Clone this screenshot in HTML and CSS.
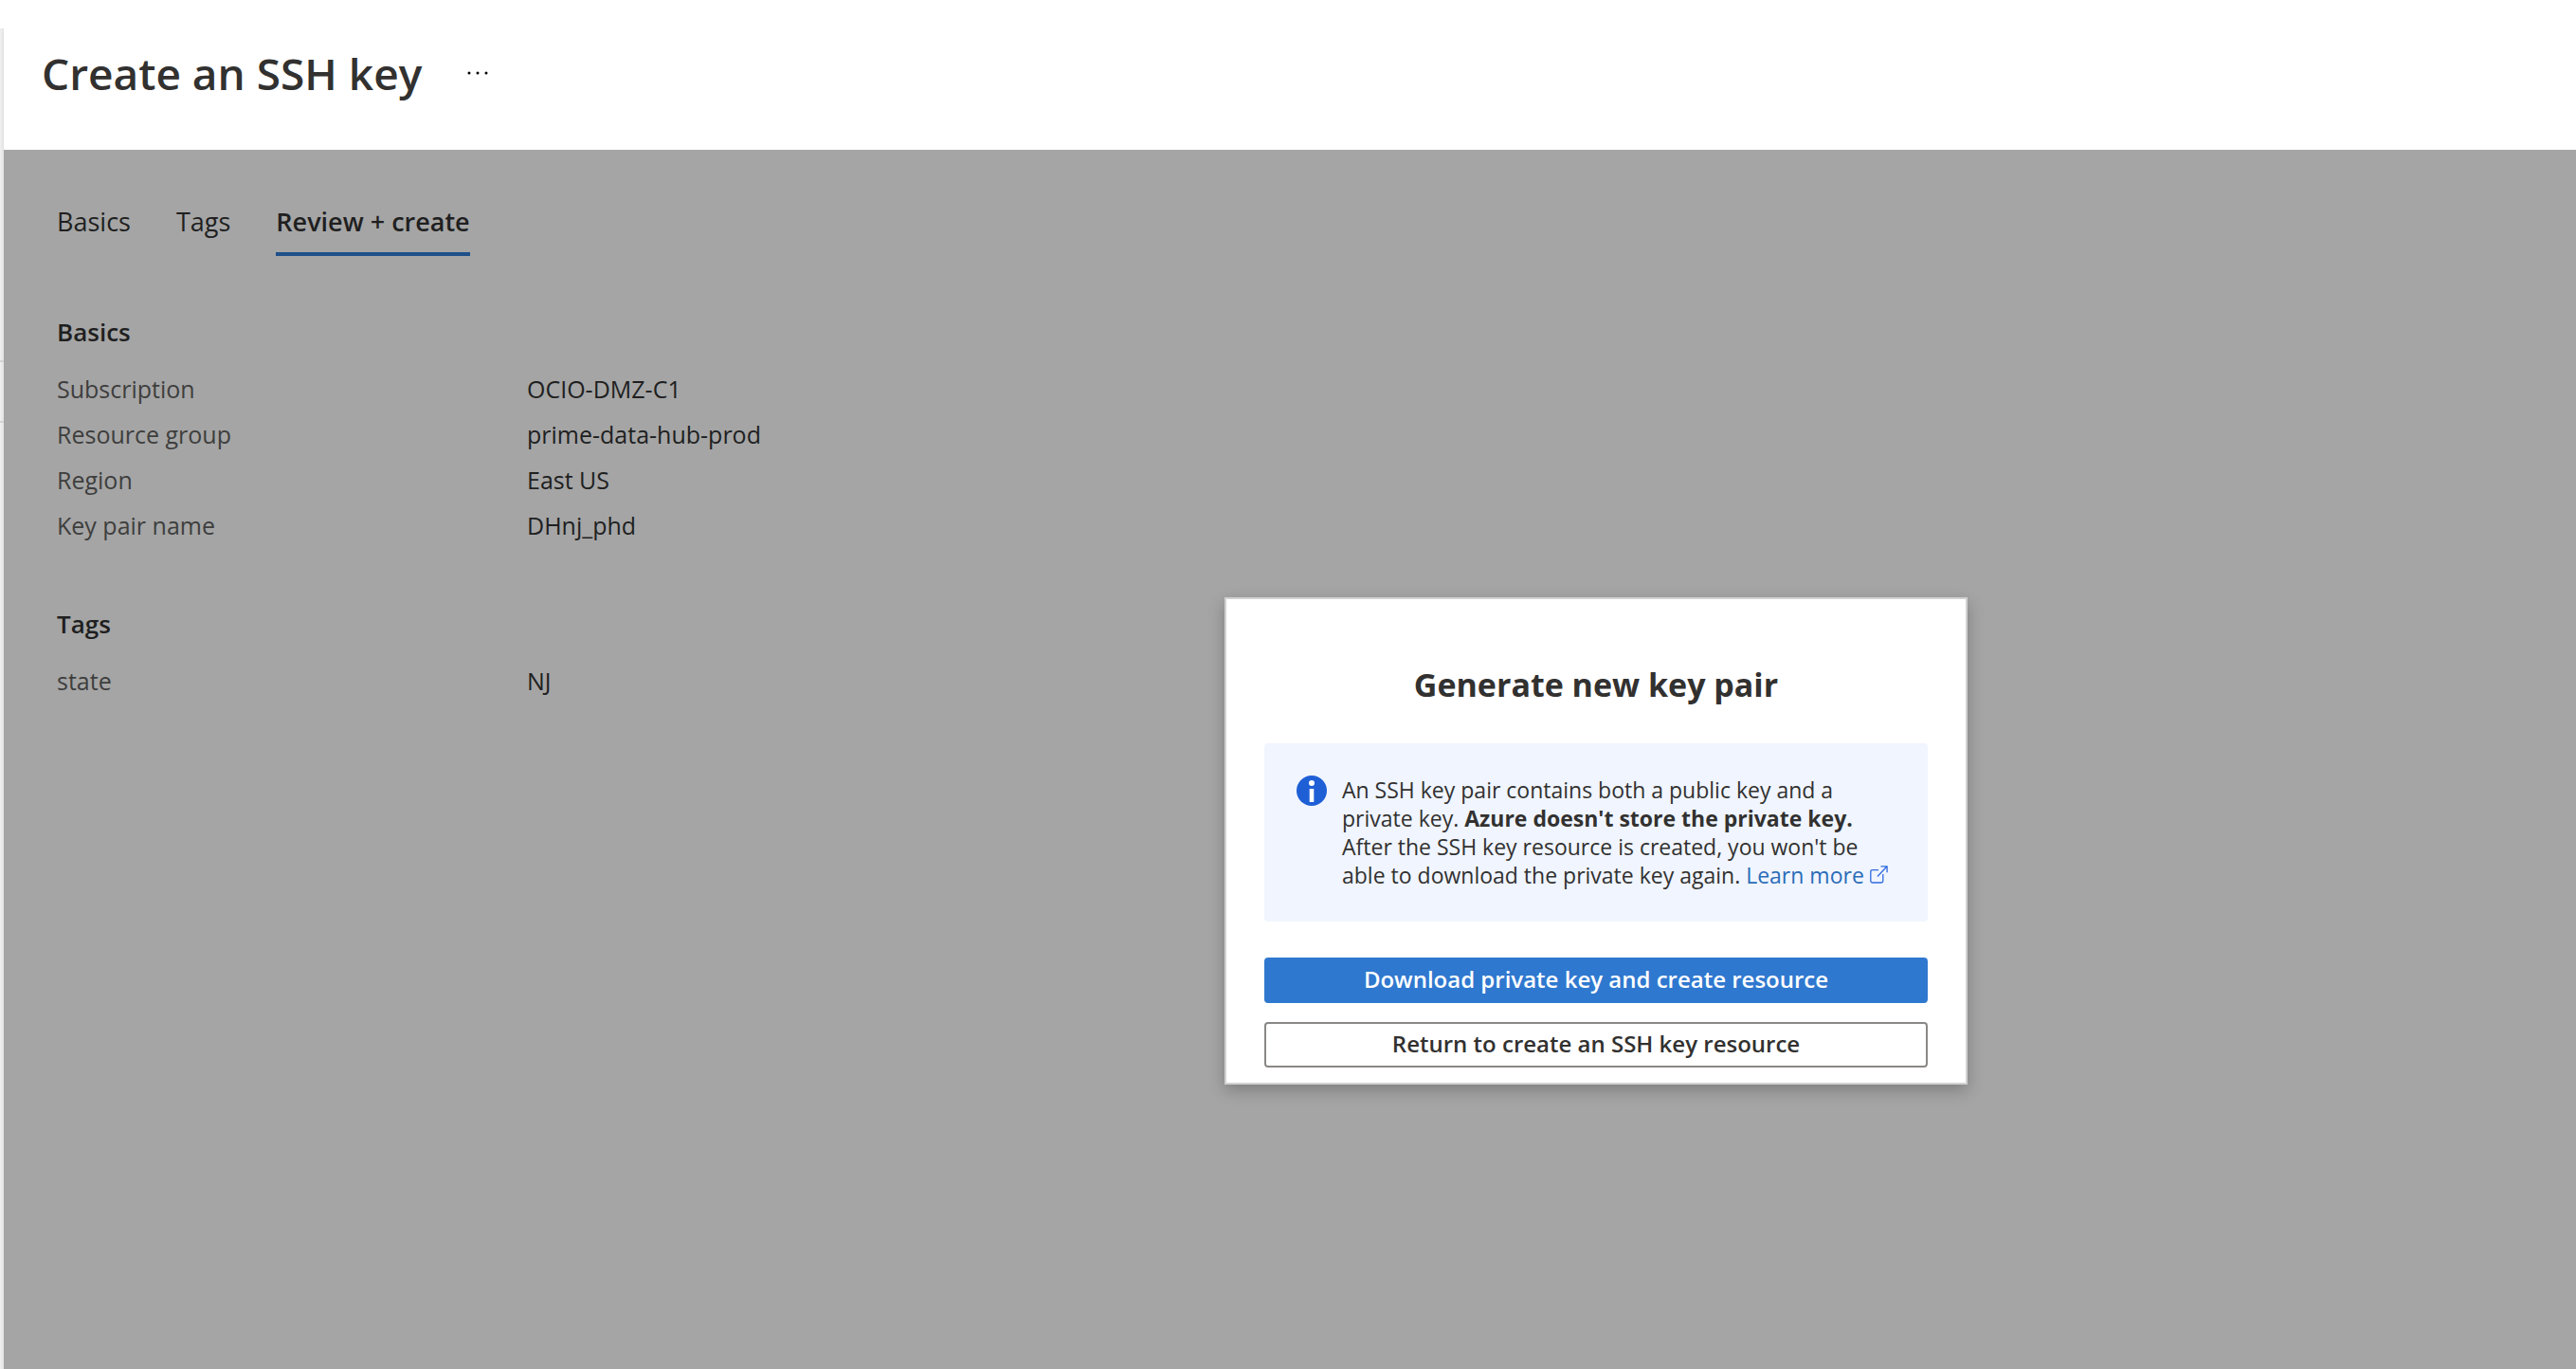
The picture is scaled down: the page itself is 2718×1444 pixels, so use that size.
FILE: index.html
```html
<!DOCTYPE html>
<html lang="en">
<head>
<meta charset="utf-8">
<title>Create an SSH key</title>
<link rel="stylesheet" href="styles.css">
</head>
<body>
<div class="portal">
  <aside class="rail"><span class="rail-item"></span></aside>
  <main class="blade">
    <header class="blade-header">
      <h1 class="blade-title">Create an SSH key</h1>
      <button class="more" type="button" aria-label="More actions">
        <svg width="22" height="4" viewBox="0 0 22 4"><circle cx="2" cy="2" r="1.5"/><circle cx="11" cy="2" r="1.5"/><circle cx="20" cy="2" r="1.5"/></svg>
      </button>
    </header>
    <div class="blade-body">
      <nav class="tabs" role="tablist">
        <button class="tab" type="button" role="tab">Basics</button>
        <button class="tab" type="button" role="tab">Tags</button>
        <button class="tab tab-active" type="button" role="tab" aria-selected="true">Review + create</button>
      </nav>
      <section class="summary">
        <h2 class="summary-title">Basics</h2>
        <dl class="fields">
          <dt>Subscription</dt><dd>OCIO-DMZ-C1</dd>
          <dt>Resource group</dt><dd>prime-data-hub-prod</dd>
          <dt>Region</dt><dd>East US</dd>
          <dt>Key pair name</dt><dd>DHnj_phd</dd>
        </dl>
      </section>
      <section class="summary">
        <h2 class="summary-title">Tags</h2>
        <dl class="fields">
          <dt>state</dt><dd>NJ</dd>
        </dl>
      </section>
    </div>
  </main>
  <div class="dialog" role="dialog" aria-labelledby="dialog-title">
    <h2 class="dialog-title" id="dialog-title">Generate new key pair</h2>
    <div class="info">
      <svg class="info-icon" width="32" height="32" viewBox="0 0 32 32"><circle cx="16" cy="16" r="16" fill="#1f5fd6"/><circle cx="16" cy="8" r="3" fill="#fff"/><path d="M13.7 14h4.6v14h-4.6z" fill="#fff"/></svg>
      <p class="info-text">An SSH key pair contains both a public key and a<br>private key. <strong>Azure doesn't store the private key.</strong><br>After the SSH key resource is created, you won't be<br>able to download the private key again. <a class="link" href="#">Learn more <svg width="19" height="19" viewBox="0 0 19 19" fill="none" stroke="#2f6ae0" stroke-width="1.3"><path d="M9 4.6H2.6Q.8 4.6.8 6.4v9.800q0 1.800 1.800 1.800h9.400q1.800 0 1.800-1.800V9"/><path d="M8 11.500 17.800 1M11.500.8h6.600v6.400"/></svg></a></p>
    </div>
    <div class="actions">
      <button class="btn btn-primary" type="button">Download private key and create resource</button>
      <button class="btn" type="button">Return to create an SSH key resource</button>
    </div>
  </div>
</div>
</body>
</html>
```
FILE: styles.css
```css
* { box-sizing: border-box; }

body {
  margin: 0;
  background: #fff;
  color: #323130;
  font-family: "Segoe UI", "Open Sans", "Noto Sans", sans-serif;
  font-size: 25px;
}

h1, h2, p, dl, dd { margin: 0; }

button { font-family: inherit; cursor: pointer; }

.portal {
  position: relative;
  display: flex;
  min-height: 100vh;
}

.rail {
  width: 4px;
  margin-top: 30px;
  padding-top: 350px;
  background: linear-gradient(to right, #f0f0f0, #e2e2e2);
}

.rail-item {
  display: block;
  height: 66px;
  border-top: 2px solid #d4d4d4;
  border-bottom: 2px solid #d4d4d4;
}

.blade {
  flex: 1;
  display: flex;
  flex-direction: column;
}

.blade-header {
  display: flex;
  align-items: center;
  gap: 40px;
  height: 158px;
  padding: 0 40px 4px;
}

.blade-title {
  font-size: 46px;
  font-weight: 600;
  line-height: 60px;
}

.more {
  display: flex;
  padding: 8px;
  border: 0;
  background: none;
}

.blade-body {
  flex: 1;
  padding: 56px;
  background: #a5a5a5;
  color: #201f1f;
}

.tabs {
  display: flex;
  gap: 48px;
  margin-bottom: 60px;
}

.tab {
  height: 56px;
  padding: 0 0 12px;
  border: 0;
  border-bottom: 4px solid transparent;
  background: none;
  color: inherit;
  font-size: 27px;
  line-height: 40px;
}

.tab-active {
  border-color: #1e5089;
  font-weight: 600;
}

.summary { margin-bottom: 60px; }

.summary-title {
  margin-bottom: 16px;
  font-size: 26px;
  font-weight: 600;
  line-height: 40px;
}

.fields {
  display: grid;
  grid-template-columns: 496px 1fr;
  line-height: 48px;
}

.fields dt { color: #3e3e3d; }

.dialog {
  position: absolute;
  left: 1292px;
  top: 630px;
  width: 784px;
  padding: 66px 40px 16px;
  border: 2px solid #d2d2d2;
  background: #fff;
  box-shadow: 0 6px 16px rgba(0, 0, 0, 0.24);
}

.dialog-title {
  margin-bottom: 38px;
  font-size: 34px;
  font-weight: 700;
  line-height: 48px;
  text-align: center;
}

.info {
  display: flex;
  gap: 16px;
  margin-bottom: 38px;
  padding: 34px;
  border-radius: 4px;
  background: #f0f5ff;
}

.info-icon { flex: none; }

.info-text {
  font-size: 23px;
  line-height: 30px;
  white-space: nowrap;
}

.link {
  color: #2b6cb8;
  text-decoration: none;
}

.actions {
  display: grid;
  gap: 20px;
}

.btn {
  height: 48px;
  padding: 0 0 2px;
  border: 2px solid #8a8886;
  border-radius: 4px;
  background: #fff;
  color: #323130;
  font-size: 24px;
  font-weight: 600;
  line-height: 40px;
}

.btn-primary {
  border-color: #2f78cf;
  background: #2f78cf;
  color: #fff;
}
```
